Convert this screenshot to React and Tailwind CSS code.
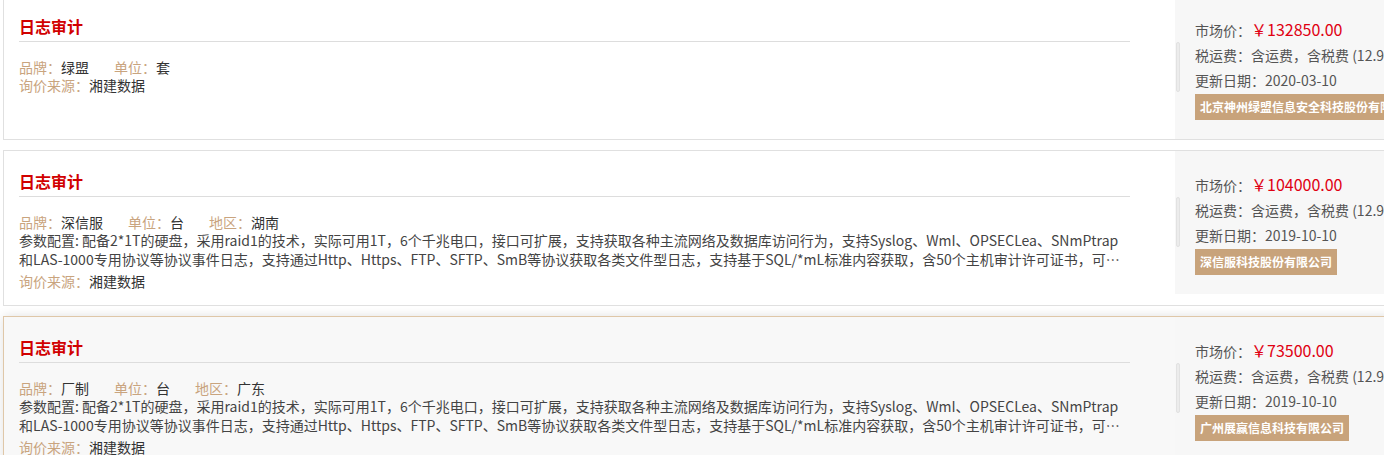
import React from "react";

const PARAMS =
  "参数配置: 配备2*1T的硬盘，采用raid1的技术，实际可用1T，6个千兆电口，接口可扩展，支持获取各种主流网络及数据库访问行为，支持Syslog、WmI、OPSECLea、SNmPtrap和LAS-1000专用协议等协议事件日志，支持通过Http、Https、FTP、SFTP、SmB等协议获取各类文件型日志，支持基于SQL/*mL标准内容获取，含50个主机审计许可证书，可选配数据库审计模块及其他扩展功能模块，支持分布式部署";

const items = [
  {
    brand: "绿盟",
    unit: "套",
    region: null,
    params: false,
    price: "￥132850.00",
    date: "2020-03-10",
    company: "北京神州绿盟信息安全科技股份有限公司",
    hover: false,
  },
  {
    brand: "深信服",
    unit: "台",
    region: "湖南",
    params: true,
    price: "￥104000.00",
    date: "2019-10-10",
    company: "深信服科技股份有限公司",
    hover: false,
  },
  {
    brand: "厂制",
    unit: "台",
    region: "广东",
    params: true,
    price: "￥73500.00",
    date: "2019-10-10",
    company: "广州展赢信息科技有限公司",
    hover: true,
  },
];

function Card({ it }) {
  return (
    <div
      className={
        "flex w-[1440px] border " +
        (it.hover
          ? "border-[#dfc7a8] bg-[#f8f8f8] shadow-[0_0_10px_rgba(0,0,0,0.12)]"
          : "border-[#e0e0e0] bg-white")
      }
    >
      <div className="w-[1171px] shrink-0 pl-[15px] pr-[45px] pt-[18px] pb-[15px]">
        <div className="border-b border-[#dddddd] pb-[3px] text-[16px] leading-[24px] font-bold text-[#d10000]">
          日志审计
        </div>
        <div className="mt-[16px] flex gap-[25px] text-[14px] leading-[18px]">
          <span>
            <span className="text-[#c9a47e]">品牌：</span>
            <span className="text-[#333]">{it.brand}</span>
          </span>
          <span>
            <span className="text-[#c9a47e]">单位：</span>
            <span className="text-[#333]">{it.unit}</span>
          </span>
          {it.region && (
            <span>
              <span className="text-[#c9a47e]">地区：</span>
              <span className="text-[#333]">{it.region}</span>
            </span>
          )}
        </div>
        {it.params && (
          <div className="mb-[3px] line-clamp-2 text-[14px] leading-[19px] text-[#444]">
            {PARAMS}
          </div>
        )}
        <div className="text-[14px] leading-[18px]">
          <span className="text-[#c9a47e]">询价来源：</span>
          <span className="text-[#333]">湘建数据</span>
        </div>
      </div>
      <div className="relative h-[143px] flex-1 self-start bg-[#f7f7f7] pl-[20px] pt-[20px] whitespace-nowrap">
        <div className="absolute left-[1px] top-[46px] h-[50px] w-[4px] rounded-[2px] border border-[#e2e2e2] bg-[#ececec]" />
        <div className="text-[14px] leading-[26px] text-[#555]">
          市场价：<span className="text-[16px] text-[#e00012]">{it.price}</span>
        </div>
        <div className="text-[14px] leading-[25px] text-[#555]">
          税运费：含运费，含税费 (12.9%)
        </div>
        <div className="text-[14px] leading-[25px] text-[#555]">
          更新日期：{it.date}
        </div>
        <div className="inline-block h-[26px] bg-[#c8a37b] px-[5px] text-[12px] leading-[26px] font-bold text-white">
          {it.company}
        </div>
      </div>
    </div>
  );
}

export default function App() {
  return (
    <div
      className="h-[455px] w-[1384px] overflow-hidden bg-white"
      style={{ fontFamily: '"Microsoft YaHei", "Noto Sans CJK SC", sans-serif' }}
    >
      <div className="-mt-[5px] flex flex-col gap-[10px] pl-[3px]">
        {items.map((it, i) => (
          <Card key={i} it={it} />
        ))}
      </div>
    </div>
  );
}
